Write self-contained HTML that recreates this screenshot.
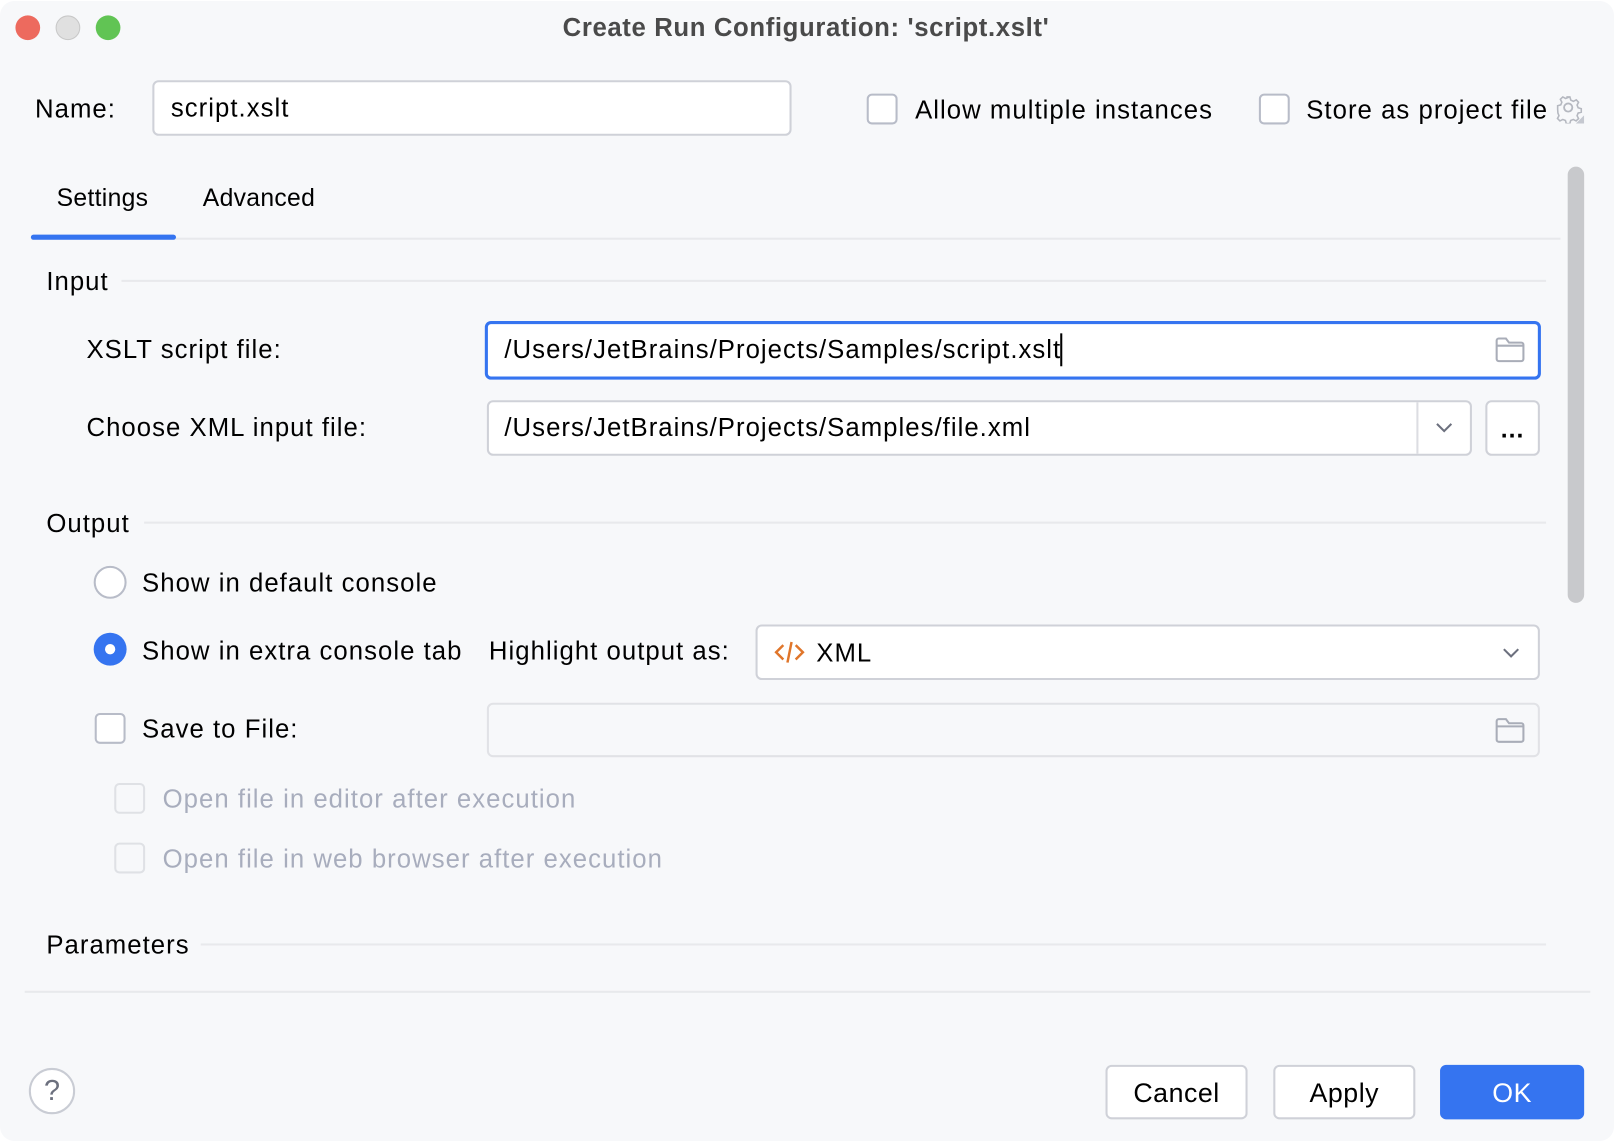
<!DOCTYPE html>
<html><head><meta charset="utf-8">
<style>
html,body{margin:0;padding:0;background:#fff;width:1614px;height:1142px;overflow:hidden}
#w{position:absolute;left:0;top:0;width:1568px;height:1110px;transform-origin:0 0;transform:scale(1.02934,1.02883);font-family:"Liberation Sans",sans-serif;color:#000}
#win{position:absolute;left:0;top:1px;width:1568px;height:1108px;background:#f7f8fa;border-radius:14px}
.t{position:absolute;font-size:25px;letter-spacing:1px;line-height:30px;white-space:nowrap;margin-top:1px}
.tab{font-size:24px;letter-spacing:0.3px}
.box{position:absolute;background:#fff;border:2px solid #cfd1d8;border-radius:6px;box-sizing:border-box}
.cb{position:absolute;width:30px;height:30px;box-sizing:border-box;border:2px solid #b8bcc8;border-radius:5px;background:#fff}
.line{position:absolute;height:2px;background:#e8e9ec}
.dis{color:#a8adbd}
.btn{position:absolute;top:1035px;height:53px;width:138px;box-sizing:border-box;border:2px solid #cfd1d8;border-radius:6px;background:#fff;font-size:26px;letter-spacing:0.5px;line-height:51px;text-align:center}
</style></head><body>
<div id="w">
<div id="win"></div>
<div style="position:absolute;left:15px;top:15px;width:24px;height:24px;border-radius:50%;background:#ed6a5e"></div>
<div style="position:absolute;left:54px;top:15px;width:22px;height:22px;border-radius:50%;background:#e0e0e0;border:1px solid #c8c8c8"></div>
<div style="position:absolute;left:93px;top:15px;width:24px;height:24px;border-radius:50%;background:#61c454"></div>
<div class="t" style="left:0;width:1566px;text-align:center;top:11px;font-weight:bold;color:#4a4a4a;font-size:25px;letter-spacing:0.6px">Create Run Configuration: 'script.xslt'</div>

<div class="t" style="left:34px;top:90px">Name:</div>
<div class="box" style="left:148px;top:78px;width:621px;height:54px"></div>
<div class="t" style="left:166px;top:89px">script.xslt</div>
<div class="cb" style="left:842px;top:91px"></div>
<div class="t" style="left:889px;top:91px">Allow multiple instances</div>
<div class="cb" style="left:1223px;top:91px"></div>
<div class="t" style="left:1269px;top:91px">Store as project file</div>
<svg style="position:absolute;left:1509px;top:90px" width="30" height="30" viewBox="0 0 30 30" fill="none" stroke="#b5b8c0" stroke-width="1.8"><path d="M13 3h4l1 3.5 3 1.5 3.3-1.7 2.6 2.8-1.7 3.2 1.2 3 3.6 1.1v4l-3.6 1-1.2 3 1.7 3.3-2.8 2.7-3.2-1.7-3 1.2-1 3.6h-4l-1-3.6-3-1.2-3.3 1.7-2.8-2.8 1.7-3.2-1.2-3L3 17v-4l3.6-1 1.2-3-1.7-3.3 2.8-2.7 3.2 1.7 3-1.2z" transform="scale(.85) translate(2,2)"/><circle cx="14.5" cy="14.5" r="4"/><path d="M30 22v8h-8z" fill="#c5c8d0" stroke="none"/></svg>

<div class="t tab" style="left:55px;top:177px">Settings</div>
<div class="t tab" style="left:197px;top:177px">Advanced</div>
<div class="line" style="left:30px;top:231px;width:1486px"></div>
<div style="position:absolute;left:30px;top:228px;width:141px;height:5px;background:#3574f0;border-radius:3px"></div>
<div style="position:absolute;left:1523px;top:162px;width:16px;height:424px;background:#c8c9cc;border-radius:8px"></div>

<div class="t" style="left:45px;top:258px">Input</div>
<div class="line" style="left:118px;top:272px;width:1384px"></div>
<div class="t" style="left:84px;top:324px">XSLT script file:</div>
<div class="box" style="left:471px;top:312px;width:1026px;height:57px;border:3px solid #3574f0"></div>
<div class="t" style="left:490px;top:324px">/Users/JetBrains/Projects/Samples/script.xslt</div>
<div style="position:absolute;left:1030px;top:324px;width:2px;height:32px;background:#000"></div>
<svg style="position:absolute;left:1452px;top:327px" width="30" height="26" viewBox="0 0 30 26" fill="none" stroke="#a9adb8" stroke-width="2"><path d="M2 4a2 2 0 0 1 2-2h7l3 4h12a2 2 0 0 1 2 2v14a2 2 0 0 1-2 2H4a2 2 0 0 1-2-2z"/><path d="M2 9h26"/></svg>

<div class="t" style="left:84px;top:400px">Choose XML input file:</div>
<div class="box" style="left:473px;top:389px;width:957px;height:54px"></div>
<div style="position:absolute;left:1376px;top:391px;width:2px;height:50px;background:#dcdde2"></div>
<svg style="position:absolute;left:1393px;top:408px" width="20" height="14" viewBox="0 0 20 14" fill="none" stroke="#6c707e" stroke-width="2"><path d="M3 4l7 7 7-7"/></svg>
<div class="t" style="left:490px;top:400px">/Users/JetBrains/Projects/Samples/file.xml</div>
<div class="box" style="left:1443px;top:389px;width:53px;height:54px"></div>
<div class="t" style="left:1443px;width:53px;text-align:center;top:402px;font-weight:bold;letter-spacing:1px;font-size:24px">...</div>

<div class="t" style="left:45px;top:493px">Output</div>
<div class="line" style="left:140px;top:507px;width:1362px"></div>
<div style="position:absolute;left:91px;top:550px;width:32px;height:32px;border-radius:50%;box-sizing:border-box;border:2px solid #b8bcc8;background:#fff"></div>
<div class="t" style="left:138px;top:551px">Show in default console</div>
<div style="position:absolute;left:91px;top:615px;width:32px;height:32px;border-radius:50%;background:#3574f0"></div>
<div style="position:absolute;left:102px;top:626px;width:10px;height:10px;border-radius:50%;background:#fff"></div>
<div class="t" style="left:138px;top:617px">Show in extra console tab</div>
<div class="t" style="left:475px;top:617px">Highlight output as:</div>
<div class="box" style="left:734px;top:607px;width:762px;height:54px"></div>
<svg style="position:absolute;left:751px;top:620px" width="32" height="28" viewBox="0 0 32 28" fill="none" stroke="#e0762b" stroke-width="2.4"><path d="M10 7L3 14l7 7M22 7l7 7-7 7M18 4l-4 20"/></svg>
<div class="t" style="left:793px;top:619px">XML</div>
<svg style="position:absolute;left:1458px;top:627px" width="20" height="14" viewBox="0 0 20 14" fill="none" stroke="#6c707e" stroke-width="2"><path d="M3 4l7 7 7-7"/></svg>

<div class="cb" style="left:92px;top:693px"></div>
<div class="t" style="left:138px;top:693px">Save to File:</div>
<div class="box" style="left:473px;top:683px;width:1023px;height:53px;background:#f7f8fa;border-color:#e1e2e6"></div>
<svg style="position:absolute;left:1452px;top:697px" width="30" height="26" viewBox="0 0 30 26" fill="none" stroke="#a9adb8" stroke-width="2"><path d="M2 4a2 2 0 0 1 2-2h7l3 4h12a2 2 0 0 1 2 2v14a2 2 0 0 1-2 2H4a2 2 0 0 1-2-2z"/><path d="M2 9h26"/></svg>

<div class="cb" style="left:111px;top:761px;border-color:#dfe1e5;background:#f7f8fa"></div>
<div class="t dis" style="left:158px;top:761px">Open file in editor after execution</div>
<div class="cb" style="left:111px;top:819px;border-color:#dfe1e5;background:#f7f8fa"></div>
<div class="t dis" style="left:158px;top:819px">Open file in web browser after execution</div>

<div class="t" style="left:45px;top:903px">Parameters</div>
<div class="line" style="left:195px;top:917px;width:1307px"></div>
<div class="line" style="left:24px;top:963px;width:1521px"></div>

<div style="position:absolute;left:28px;top:1038px;width:45px;height:45px;border-radius:50%;box-sizing:border-box;border:2px solid #c9ccd4;background:#fff;font-size:28px;line-height:40px;text-align:center;color:#6c707e">?</div>
<div class="btn" style="left:1074px">Cancel</div>
<div class="btn" style="left:1237px">Apply</div>
<div class="btn" style="left:1399px;width:140px;background:#3574f0;border-color:#3574f0;color:#fff">OK</div>
</div>
</body></html>
